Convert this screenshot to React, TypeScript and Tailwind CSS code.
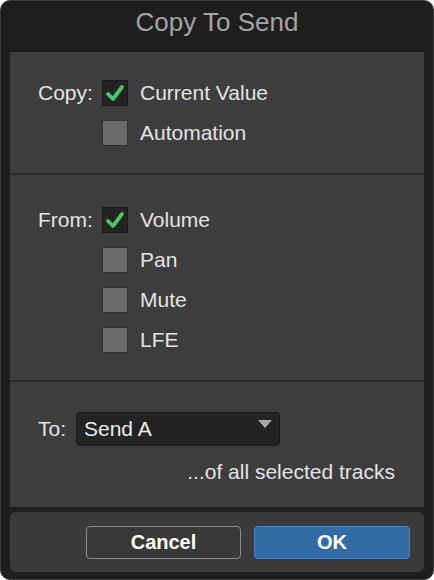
import React from "react";

const font = { fontFamily: '"Liberation Sans", Arial, sans-serif' };

function Check({ checked }: { checked?: boolean }) {
	if (checked) {
		return (
			<div className="w-[26px] h-[26px] bg-[#232323] border border-[#1a1a1a] flex items-center justify-center shrink-0">
				<svg width="20" height="18" viewBox="0 0 20 18">
					<path
						d="M3 10 L8 15 L17 3"
						fill="none"
						stroke="#4cc46a"
						strokeWidth="3.8"
						strokeLinecap="round"
						strokeLinejoin="round"
					/>
				</svg>
			</div>
		);
	}
	return <div className="w-[26px] h-[26px] bg-[#6a6a6a] border border-[#333] shrink-0" />;
}

function Row({ label, text, checked }: { label?: string; text: string; checked?: boolean }) {
	return (
		<div className="flex items-center h-[40px]">
			<div className="w-[64px] text-[21px] text-[#e4e4e4]">{label}</div>
			<Check checked={checked} />
			<div className="ml-[12px] text-[21px] text-[#e4e4e4]">{text}</div>
		</div>
	);
}

export default function App() {
	return (
		<div className="w-[434px] h-[580px] bg-[#1e1e1e] rounded-[10px] border border-[#3c3c3c] flex flex-col overflow-hidden" style={font}>
			<div className="h-[51px] flex items-center justify-center text-[26px] text-[#a4a4a4] pb-[8px]">Copy To Send</div>
			<div className="mx-[9px] bg-[#3d3d3d] flex flex-col">
				<div className="pl-[28px] pt-[21px] pb-[20px] h-[121px]">
					<Row label="Copy:" text="Current Value" checked />
					<Row text="Automation" />
				</div>
				<div className="h-[2px] bg-[#2c2c2c]" />
				<div className="pl-[28px] pt-[25px] pb-[20px] h-[205px]">
					<Row label="From:" text="Volume" checked />
					<Row text="Pan" />
					<Row text="Mute" />
					<Row text="LFE" />
				</div>
				<div className="h-[2px] bg-[#2c2c2c]" />
				<div className="pl-[28px] pr-[29px] pt-[30px] h-[125px] flex flex-col">
					<div className="flex items-center">
						<div className="w-[38px] text-[21px] text-[#e4e4e4]">To:</div>
						<div className="w-[204px] h-[34px] bg-[#232323] border border-[#1a1a1a] rounded-[4px] flex items-center pl-[7px] pr-[7px] justify-between">
							<span className="text-[21px] text-[#ececec]">Send A</span>
							<svg width="14" height="9" viewBox="0 0 14 9" className="mb-[10px]">
								<path d="M0 0 H14 L7 8 Z" fill="#a8a8a8" />
							</svg>
						</div>
					</div>
					<div className="mt-[10px] text-right text-[21px] text-[#e4e4e4]">...of all selected tracks</div>
				</div>
			</div>
			<div className="mx-[9px] mt-[5px] h-[60px] bg-[#3a3a3a] rounded-[6px] flex items-center justify-end gap-[13px] pr-[14px]">
				<button className="w-[155px] h-[33px] rounded-[4px] border border-[#8c8c8c] bg-[#383838] text-white text-[20px] font-bold">
					Cancel
				</button>
				<button className="w-[156px] h-[33px] rounded-[4px] border border-[#4b84bf] bg-[#336ba5] text-white text-[20px] font-bold">
					OK
				</button>
			</div>
		</div>
	);
}
